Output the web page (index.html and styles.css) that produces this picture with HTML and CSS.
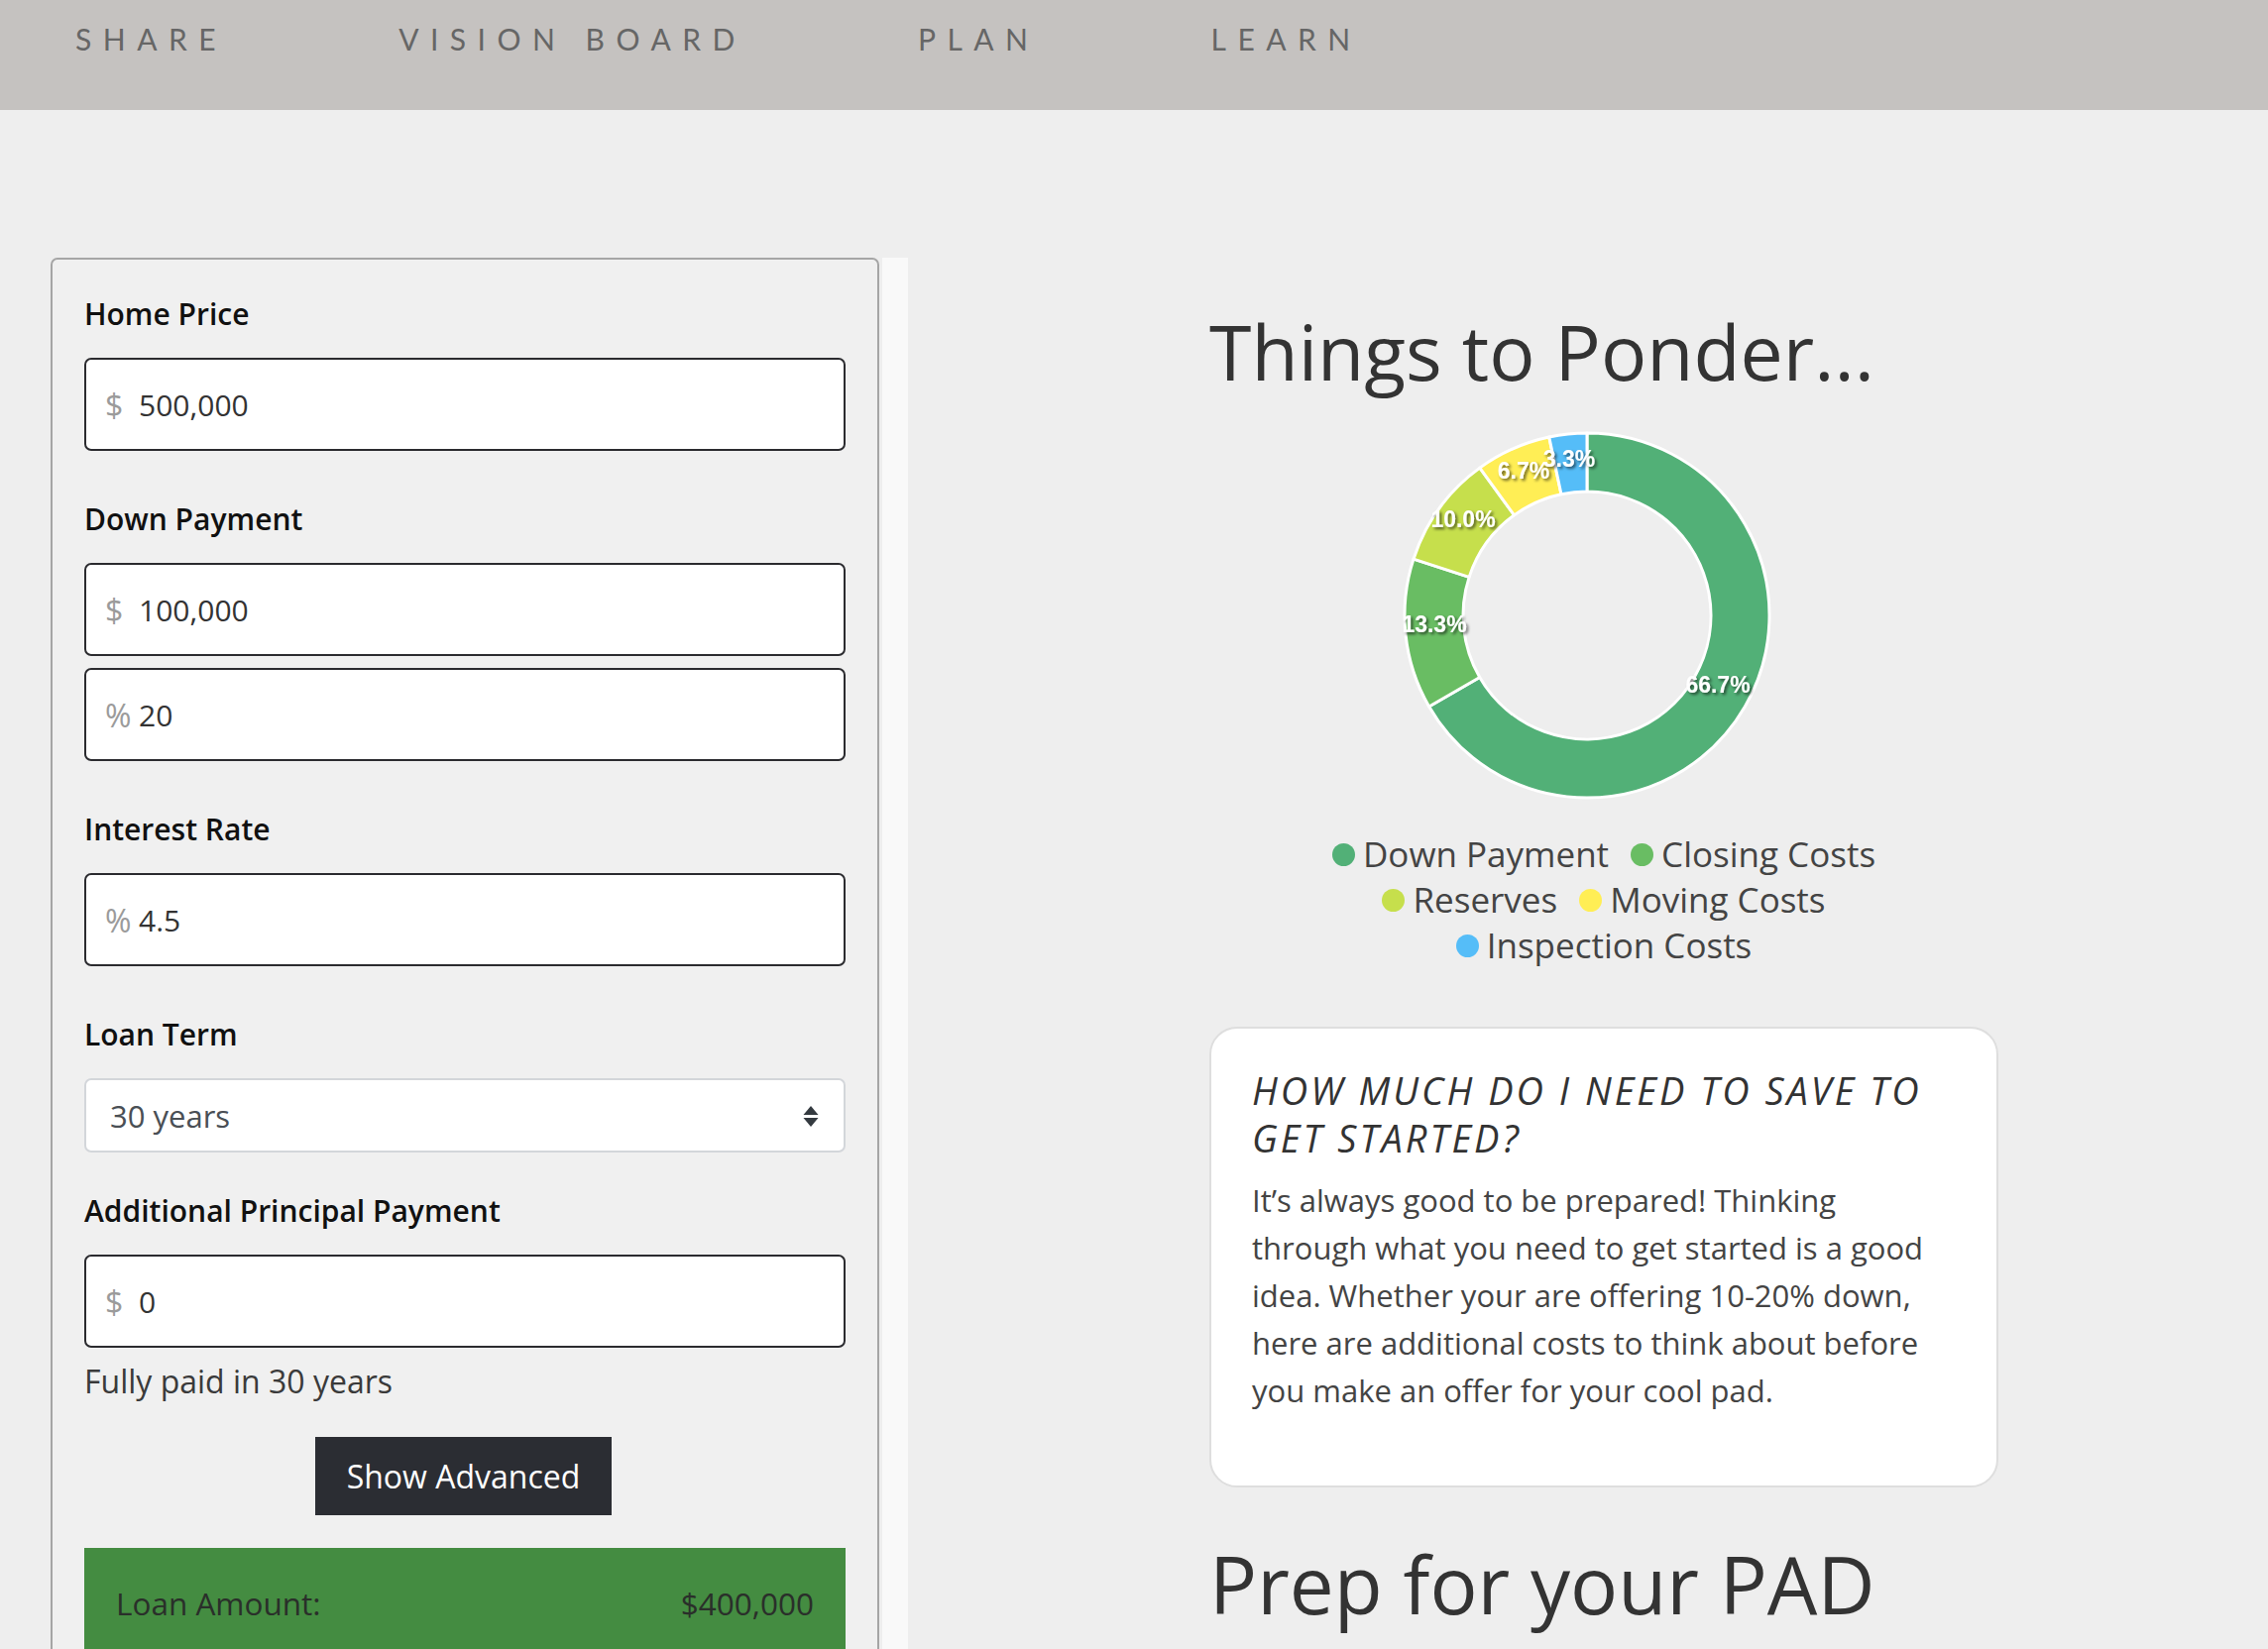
FILE: index.html
```html
<!DOCTYPE html>
<html lang="en">
<head>
<meta charset="utf-8">
<title>Things to Ponder</title>
<link rel="stylesheet" href="styles.css">
</head>
<body>
<header class="topbar">
  <nav class="nav">
    <a class="nav-link">SHARE</a>
    <a class="nav-link">VISION BOARD</a>
    <a class="nav-link">PLAN</a>
    <a class="nav-link">LEARN</a>
  </nav>
</header>

<main class="layout">
  <section class="calc-col">
    <div class="calc-card">
      <div class="field">
        <label class="field-label">Home Price</label>
        <div class="input-box"><span class="prefix">$</span><input class="input-value" value="500,000"></div>
      </div>
      <div class="field">
        <label class="field-label">Down Payment</label>
        <div class="input-box"><span class="prefix">$</span><input class="input-value" value="100,000"></div>
        <div class="input-box input-box--stacked"><span class="prefix">%</span><input class="input-value" value="20"></div>
      </div>
      <div class="field">
        <label class="field-label">Interest Rate</label>
        <div class="input-box"><span class="prefix">%</span><input class="input-value" value="4.5"></div>
      </div>
      <div class="field field--select">
        <label class="field-label">Loan Term</label>
        <div class="select-box">
          <span class="select-text">30 years</span>
          <svg class="select-arrows" width="16" height="21" viewBox="0 0 16 21"><polygon points="8,0 15.5,9 0.5,9" /><polygon points="0.5,12 15.5,12 8,21" /></svg>
        </div>
      </div>
      <div class="field field--last">
        <label class="field-label">Additional Principal Payment</label>
        <div class="input-box"><span class="prefix">$</span><input class="input-value" value="0"></div>
      </div>
      <p class="paid-note">Fully paid in 30 years</p>
      <div class="btn-row"><button class="btn-dark">Show Advanced</button></div>
      <div class="summary">
        <div class="summary-row"><span>Loan Amount:</span><span>$400,000</span></div>
      </div>
    </div>
  </section>

  <div class="side-strip"></div>

  <section class="content">
    <h1 class="heading">Things to Ponder...</h1>

    <svg class="donut" width="796" height="390" viewBox="0 0 796 390">
      <defs>
        <filter id="txtshadow" x="-30%" y="-40%" width="160%" height="190%">
          <feDropShadow dx="2" dy="2" stdDeviation="1.6" flood-color="#000" flood-opacity="0.6"/>
        </filter>
      </defs>
      <g class="slices">
        <path class="s-down" d="M 381 11 A 184 184 0 1 1 221.65 287 L 272.75 257.5 A 125 125 0 1 0 381 70 Z"/>
        <path class="s-closing" d="M 221.65 287 A 184 184 0 0 1 206.0 138.14 L 262.11 156.37 A 125 125 0 0 0 272.75 257.5 Z"/>
        <path class="s-reserves" d="M 206.0 138.14 A 184 184 0 0 1 272.84 46.14 L 307.52 93.87 A 125 125 0 0 0 262.11 156.37 Z"/>
        <path class="s-moving" d="M 272.84 46.14 A 184 184 0 0 1 342.75 15.03 L 355.01 72.74 A 125 125 0 0 0 307.52 93.87 Z"/>
        <path class="s-inspect" d="M 342.75 15.03 A 184 184 0 0 1 381 11 L 381 70 A 125 125 0 0 0 355.01 72.74 Z"/>
      </g>
      <g class="slice-labels" filter="url(#txtshadow)">
        <text x="513" y="265">66.7%</text>
        <text x="227" y="204">13.3%</text>
        <text x="256" y="98">10.0%</text>
        <text x="317" y="49">6.7%</text>
        <text x="363" y="37">3.3%</text>
      </g>
    </svg>

    <ul class="legend">
      <li class="legend-item"><span class="dot dot--down"></span>Down Payment</li>
      <li class="legend-item"><span class="dot dot--closing"></span>Closing Costs</li>
      <li class="legend-item"><span class="dot dot--reserves"></span>Reserves</li>
      <li class="legend-item"><span class="dot dot--moving"></span>Moving Costs</li>
      <li class="legend-item"><span class="dot dot--inspect"></span>Inspection Costs</li>
    </ul>

    <article class="info-card">
      <h3 class="info-title">HOW MUCH DO I NEED TO SAVE TO<br>GET STARTED?</h3>
      <p class="info-text">It’s always good to be prepared! Thinking<br>through what you need to get started is a good<br>idea. Whether your are offering 10-20% down,<br>here are additional costs to think about before<br>you make an offer for your cool pad.</p>
    </article>

    <h2 class="heading heading--second">Prep for your PAD</h2>
  </section>
</main>
</body>
</html>
```

FILE: styles.css
```css
html, body {
  margin: 0;
  padding: 0;
}

body {
  background: #eeeeee;
  font-family: "Open Sans", "Noto Sans", sans-serif;
  color: #333;
  overflow: hidden;
}

/* ---------- top bar ---------- */
.topbar {
  height: 111px;
  background: #c5c2c0;
}

.nav {
  display: flex;
  gap: 173px;
  padding: 22px 0 0 76px;
}

.nav-link {
  font-family: "Lato", sans-serif;
  font-weight: 400;
  font-size: 30px;
  line-height: 34px;
  letter-spacing: 11.5px;
  color: #666;
  text-decoration: none;
}

/* ---------- layout ---------- */
.layout {
  display: flex;
  align-items: flex-start;
  padding-top: 149px;
}

.calc-col {
  margin-left: 51px;
  width: 836px;
  flex: none;
}

.side-strip {
  flex: none;
  width: 26px;
  margin-left: 3px;
  align-self: stretch;
  background: #f9f9f9;
  min-height: 1300px;
}

.content {
  flex: none;
  width: 796px;
  margin-left: 304px;
}

/* ---------- calculator card ---------- */
.calc-card {
  box-sizing: border-box;
  background: #f0f0f0;
  border: 2px solid #a5a5a5;
  border-radius: 7px;
  padding: 33px 32px 0;
}

.field {
  margin-bottom: 47px;
}

.field--select {
  margin-bottom: 37px;
}

.field--last {
  margin-bottom: 12px;
}

.field-label {
  display: block;
  font-size: 30px;
  font-weight: 600;
  line-height: 44px;
  color: #111;
  margin-bottom: 22px;
}

.input-box {
  box-sizing: border-box;
  display: flex;
  align-items: center;
  height: 94px;
  background: #fff;
  border: 2px solid #2b2b2f;
  border-radius: 7px;
  padding-left: 19px;
}

.input-box--stacked {
  margin-top: 12px;
}

.prefix {
  width: 34px;
  flex: none;
  font-size: 32px;
  color: #9b9b9b;
}

.input-value {
  flex: 1;
  min-width: 0;
  border: 0;
  outline: 0;
  padding: 0;
  background: transparent;
  font-family: "Open Sans", "Noto Sans", sans-serif;
  font-size: 30px;
  color: #333;
}

.select-box {
  position: relative;
  box-sizing: border-box;
  display: flex;
  align-items: center;
  height: 75px;
  background: #fff;
  border: 2px solid #d3d6da;
  border-radius: 7px;
  padding-left: 24px;
}

.select-text {
  font-size: 31px;
  color: #4a4f55;
}

.select-arrows {
  position: absolute;
  right: 25px;
  top: 26px;
  fill: #343a40;
}

.paid-note {
  margin: 0;
  font-size: 32px;
  line-height: 44px;
  color: #3a3a3a;
}

.btn-row {
  display: flex;
  justify-content: center;
  margin-top: 34px;
}

.btn-dark {
  width: 299px;
  height: 79px;
  border: 0;
  border-radius: 0;
  background: #2b2d33;
  color: #fff;
  font-family: "Open Sans", "Noto Sans", sans-serif;
  font-size: 32px;
  padding: 0;
  margin-right: 3px;
}

.summary {
  margin-top: 33px;
  background: #448c41;
  padding: 34px 32px 120px;
}

.summary-row {
  display: flex;
  justify-content: space-between;
  font-size: 31.5px;
  line-height: 44px;
  color: #2a2f2a;
}

/* ---------- right content ---------- */
.heading {
  margin: 49px 0 0;
  font-size: 77px;
  font-weight: 400;
  line-height: 91px;
  color: #333;
}

.heading--second {
  margin-top: 51px;
  font-size: 80px;
}

.donut {
  display: block;
  margin-top: 26px;
}

.slices path {
  stroke: #fff;
  stroke-width: 3;
  stroke-linejoin: round;
}

.s-down { fill: #52b077; }
.s-closing { fill: #69bd63; }
.s-reserves { fill: #c6df4c; }
.s-moving { fill: #ffee55; }
.s-inspect { fill: #55bdf8; }

.slice-labels text {
  font-family: "Liberation Sans", Arial, sans-serif;
  font-weight: 700;
  font-size: 23px;
  fill: #fff;
  text-anchor: middle;
  dominant-baseline: central;
}

.legend {
  list-style: none;
  margin: 23px auto 0;
  padding: 0;
  max-width: 680px;
  display: flex;
  flex-wrap: wrap;
  justify-content: center;
  column-gap: 22px;
}

.legend-item {
  display: flex;
  align-items: center;
  gap: 8px;
  font-size: 35px;
  line-height: 46px;
  color: #444;
}

.dot {
  width: 23px;
  height: 23px;
  border-radius: 50%;
  flex: none;
}

.dot--down { background: #52b077; }
.dot--closing { background: #69bd63; }
.dot--reserves { background: #c6df4c; }
.dot--moving { background: #ffee55; }
.dot--inspect { background: #55bdf8; }

.info-card {
  margin-top: 59px;
  box-sizing: border-box;
  background: #fff;
  border: 2px solid #dedede;
  border-radius: 28px;
  padding: 38px 20px 72px 41px;
}

.info-title {
  margin: 0;
  font-size: 38px;
  font-style: italic;
  font-weight: 400;
  letter-spacing: 3px;
  line-height: 48px;
  color: #333;
}

.info-text {
  margin: 15px 0 0;
  font-size: 31px;
  line-height: 48px;
  color: #444;
}
```
